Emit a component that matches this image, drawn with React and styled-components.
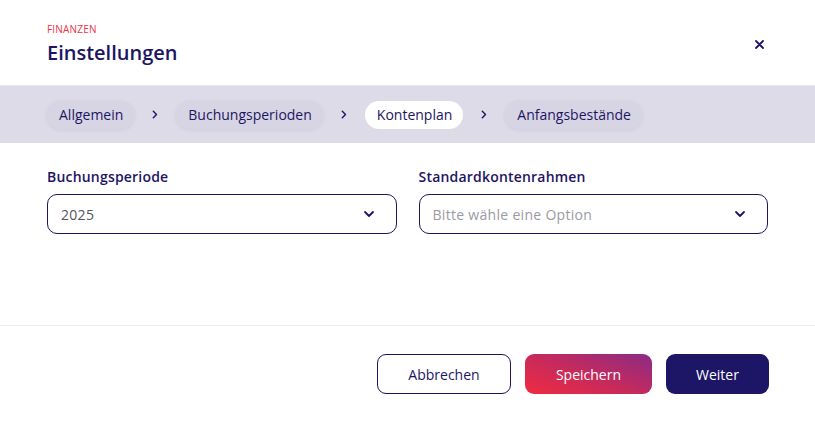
import React from 'react';
import styled, { createGlobalStyle } from 'styled-components';

const navy = '#1d1563';

const GlobalStyle = createGlobalStyle`
  html, body {
    margin: 0;
    padding: 0;
    background: #fff;
    font-family: 'Open Sans', 'Noto Sans', sans-serif;
    color: ${navy};
  }
`;

const Dialog = styled.div`
  width: 815px;
  height: 436px;
  display: flex;
  flex-direction: column;
  background: #fff;
`;

const Header = styled.header`
  height: 86px;
  box-sizing: border-box;
  padding: 22px 47px 0 47px;
  display: flex;
  justify-content: space-between;
  align-items: flex-start;
  border-bottom: 1px solid #ebeaf1;
`;

const Eyebrow = styled.div`
  font-size: 10px;
  line-height: 14px;
  color: #ef3247;
  text-transform: uppercase;
  letter-spacing: 0.2px;
`;

const Title = styled.h1`
  margin: 3px 0 0;
  font-size: 20px;
  line-height: 28px;
  font-weight: 600;
  color: ${navy};
`;

const Close = styled.button`
  border: 0;
  background: none;
  padding: 0;
  margin: 15px 2px 0 0;
  width: 14px;
  height: 14px;
  display: flex;
  align-items: center;
  justify-content: center;
  color: ${navy};
  cursor: pointer;
`;

const Steps = styled.nav`
  height: 57px;
  background: #dddbe8;
  display: flex;
  align-items: center;
  padding: 0 47px;
  gap: 15px;
`;

const Step = styled.span`
  height: 28px;
  display: inline-flex;
  align-items: center;
  padding: 0 11px 0 12px;
  border-radius: 14px;
  font-size: 14px;
  color: ${navy};
  background: ${(p) => (p.$active ? '#fff' : '#d7d5e3')};
  box-shadow: ${(p) => (p.$active ? 'none' : '0 1px 4px rgba(40, 30, 100, 0.08)')};
`;

const Sep = styled.span`
  width: 12px;
  display: inline-flex;
  justify-content: center;
  color: ${navy};
`;

const Body = styled.main`
  flex: 0 0 auto;
  height: 183px;
  padding: 25px 47px 0;
  box-sizing: border-box;
  display: grid;
  grid-template-columns: 1fr 1fr;
  column-gap: 22px;
  align-content: start;
  border-bottom: 1px solid #ebebee;
`;

const Field = styled.div`
  display: flex;
  flex-direction: column;
`;

const Label = styled.label`
  font-size: 14px;
  font-weight: 600;
  line-height: 18px;
  letter-spacing: 0.2px;
  margin-bottom: 8px;
  color: ${navy};
`;

const Select = styled.div`
  height: 40px;
  box-sizing: border-box;
  border: 1px solid ${navy};
  border-radius: 10px;
  display: flex;
  align-items: center;
  justify-content: space-between;
  padding: 0 21px 0 13px;
  font-size: 14px;
  letter-spacing: 0.3px;
  color: ${(p) => (p.$placeholder ? '#9a9aa3' : '#55545f')};
`;

const Footer = styled.footer`
  flex: 1;
  display: flex;
  justify-content: flex-end;
  align-items: flex-start;
  padding: 28px 46px 0;
  gap: 14px;
`;

const Button = styled.button`
  height: 40px;
  box-sizing: border-box;
  border-radius: 9px;
  font-family: inherit;
  font-size: 14px;
  padding: 0;
  width: ${(p) => p.$w}px;
  cursor: pointer;
  border: 1px solid ${navy};
  background: #fff;
  color: ${navy};

  &.primary {
    border: 0;
    color: #fff;
    background: linear-gradient(20deg, #f02b40 0%, #c92a5a 45%, #8b2b85 100%);
  }

  &.dark {
    border: 0;
    color: #fff;
    background: #1d1566;
  }
`;

const Chevron = ({ size = 12 }) => (
  <svg width={size} height={size} viewBox="0 0 12 12" fill="none">
    <path d="M2 4l4 4 4-4" stroke={navy} strokeWidth="1.8" strokeLinecap="round" strokeLinejoin="round" />
  </svg>
);

const Arrow = () => (
  <svg width="6" height="9" viewBox="0 0 6 9" fill="none">
    <path d="M1.3 1.2l3.2 3.3-3.2 3.3" stroke={navy} strokeWidth="1.4" strokeLinecap="round" strokeLinejoin="round" />
  </svg>
);

const steps = ['Allgemein', 'Buchungsperioden', 'Kontenplan', 'Anfangsbestände'];

const App = () => (
  <Dialog>
    <GlobalStyle />
    <Header>
      <div>
        <Eyebrow>Finanzen</Eyebrow>
        <Title>Einstellungen</Title>
      </div>
      <Close aria-label="Schließen">
        <svg width="9" height="9" viewBox="0 0 9 9">
          <path d="M1 1l7 7M8 1L1 8" stroke={navy} strokeWidth="1.8" strokeLinecap="round" />
        </svg>
      </Close>
    </Header>
    <Steps>
      {steps.map((s, i) => (
        <React.Fragment key={s}>
          {i > 0 && (
            <Sep>
              <Arrow />
            </Sep>
          )}
          <Step $active={s === 'Kontenplan'}>{s}</Step>
        </React.Fragment>
      ))}
    </Steps>
    <Body>
      <Field>
        <Label>Buchungsperiode</Label>
        <Select>
          2025
          <Chevron />
        </Select>
      </Field>
      <Field>
        <Label>Standardkontenrahmen</Label>
        <Select $placeholder>
          Bitte wähle eine Option
          <Chevron />
        </Select>
      </Field>
    </Body>
    <Footer>
      <Button $w={134}>Abbrechen</Button>
      <Button $w={127} className="primary">Speichern</Button>
      <Button $w={103} className="dark">Weiter</Button>
    </Footer>
  </Dialog>
);

export default App;
